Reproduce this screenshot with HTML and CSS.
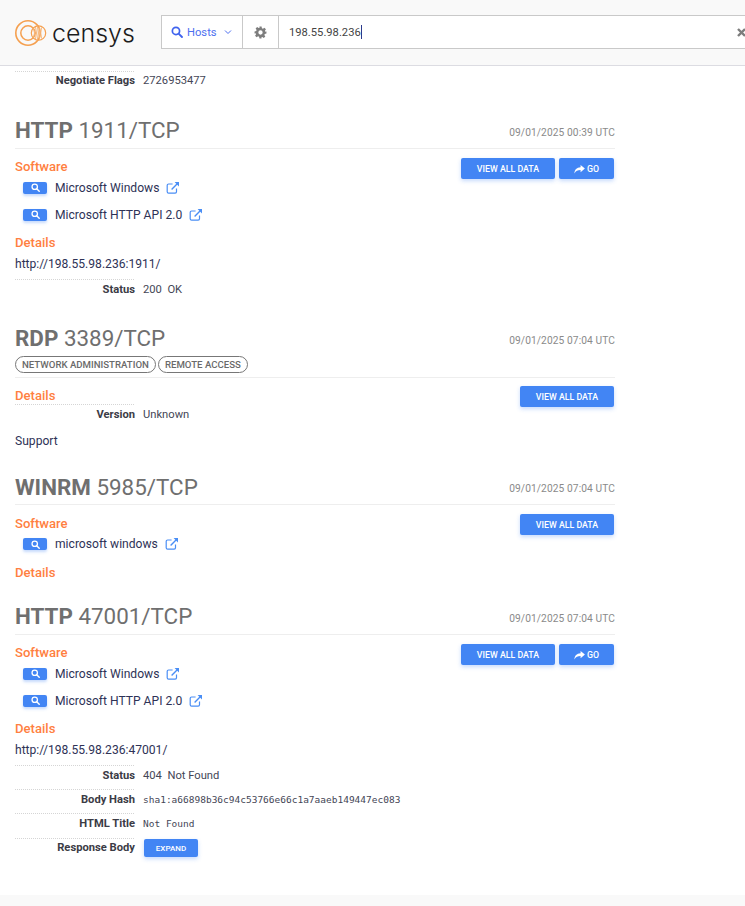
FILE: index.html
```html
<!DOCTYPE html>
<html lang="en">
<head>
  <meta charset="UTF-8">
  <title>198.55.98.236 - Censys</title>
  <link rel="stylesheet" href="styles.css">
</head>
<body>
  <svg class="icon-defs" width="0" height="0" aria-hidden="true">
    <symbol id="i-search" viewBox="0 0 14 14">
      <circle cx="5.8" cy="5.8" r="4.2" fill="none" stroke="currentColor" stroke-width="2"/>
      <path d="M8.9 8.9 12.8 12.8" fill="none" stroke="currentColor" stroke-width="2.2" stroke-linecap="round"/>
    </symbol>
    <symbol id="i-external" viewBox="0 0 14 14">
      <path d="M10.5 7.6v3.2a1.4 1.4 0 0 1-1.4 1.4H2.6a1.4 1.4 0 0 1-1.4-1.4V4.4A1.4 1.4 0 0 1 2.6 3h4" fill="none" stroke="currentColor" stroke-width="1.2"/>
      <path d="M5.6 8.4 12 2" fill="none" stroke="currentColor" stroke-width="1.4"/>
      <path d="M8.6 1h4.4v4.4z" fill="currentColor"/>
    </symbol>
  </svg>

  <div class="page">
    <!-- Header -->
    <header class="topbar">
      <div class="logo">
        <svg class="logo-mark" width="32" height="28" viewBox="0 0 32 28">
          <circle cx="13" cy="14" r="12.2" fill="none" stroke="#f5a050" stroke-width="1.6"/>
          <circle cx="13" cy="14" r="7.2" fill="none" stroke="#f5a050" stroke-width="1.5"/>
          <circle cx="23.5" cy="14" r="7.2" fill="none" stroke="#f5a050" stroke-width="1.2"/>
          <path d="M18.5 9.5q2 4.5 0 9M20.5 8q2 6 0 12M22.5 7.5q1.5 6.5 0 13M24.5 7.5q-1.5 6.5 0 13M26.5 8.5q-1.5 5.5 0 11" fill="none" stroke="#f7b678" stroke-width="1"/>
        </svg>
        <span class="logo-text">censys</span>
      </div>
      <div class="search">
        <div class="search-type">
          <svg class="search-type-icon" width="12" height="12"><use href="#i-search"/></svg>
          <span>Hosts</span>
          <svg class="chevron" width="8" height="6" viewBox="0 0 8 6"><path d="M1 1.5 4 4.5 7 1.5" fill="none" stroke="currentColor" stroke-width="1"/></svg>
        </div>
        <div class="search-gear">
          <svg width="13" height="13" viewBox="0 0 24 24"><path fill="#7d7d7d" fill-rule="evenodd" d="M10 1h4l.6 3.1 1.9.8 2.7-1.8 2.8 2.8-1.8 2.7.8 1.9L23 10v4l-3.1.6-.8 1.9 1.8 2.7-2.8 2.8-2.7-1.8-1.9.8L14 23h-4l-.6-3.1-1.9-.8-2.7 1.8-2.8-2.8 1.8-2.7-.8-1.9L1 14v-4l3-.6.8-1.9L3 4.8 5.8 2l2.7 1.8 1.9-.8zM12 8a4 4 0 1 0 0 8 4 4 0 0 0 0-8z"/></svg>
        </div>
        <div class="search-input"><span>198.55.98.236</span><i class="caret"></i></div>
        <svg class="search-clear" width="9" height="9" viewBox="0 0 9 9"><path d="M1 1 8 8M8 1 1 8" stroke="#7d7d7d" stroke-width="2.4"/></svg>
      </div>
    </header>

    <main class="content">
      <div class="kv kv-first">
        <span class="kv-key">Negotiate Flags</span>
        <span class="kv-val">2726953477</span>
      </div>

      <!-- HTTP 1911 -->
      <section class="service service-http1">
        <div class="service-head">
          <h2><b>HTTP</b> 1911/TCP</h2>
          <span class="date">09/01/2025 00:39 UTC</span>
        </div>
        <div class="service-body">
          <div class="service-main">
            <h3>Software</h3>
            <div class="software"><span class="sw-btn"><svg width="9" height="9"><use href="#i-search"/></svg></span>Microsoft Windows<svg class="ext" width="14" height="14"><use href="#i-external"/></svg></div>
            <div class="software"><span class="sw-btn"><svg width="9" height="9"><use href="#i-search"/></svg></span>Microsoft HTTP API 2.0<svg class="ext" width="14" height="14"><use href="#i-external"/></svg></div>
            <h3 class="details">Details</h3>
            <div class="url">http://198.55.98.236:1911/</div>
            <div class="kv"><span class="kv-key">Status</span><span class="kv-val">200&nbsp; OK</span></div>
          </div>
          <div class="actions">
            <a class="btn btn-data">View all data</a>
            <a class="btn btn-go"><svg width="11" height="9" viewBox="0 0 12 10"><path fill="#fff" d="M7.2 0 12 4 7.2 8V5.6C4 5.6 1.8 6.4.4 9.4.4 5.4 2.8 2.6 7.2 2.4z"/></svg>Go</a>
          </div>
        </div>
      </section>

      <!-- RDP -->
      <section class="service service-rdp">
        <div class="service-head">
          <div>
            <h2><b>RDP</b> 3389/TCP</h2>
            <div class="tags">
              <span class="tag">Network Administration</span>
              <span class="tag">Remote Access</span>
            </div>
          </div>
          <span class="date">09/01/2025 07:04 UTC</span>
        </div>
        <div class="service-body">
          <div class="service-main">
            <h3>Details</h3>
            <div class="kv"><span class="kv-key">Version</span><span class="kv-val">Unknown</span></div>
            <div class="support">Support</div>
          </div>
          <div class="actions"><a class="btn btn-data">View all data</a></div>
        </div>
      </section>

      <!-- WINRM -->
      <section class="service service-winrm">
        <div class="service-head">
          <h2><b>WINRM</b> 5985/TCP</h2>
          <span class="date">09/01/2025 07:04 UTC</span>
        </div>
        <div class="service-body">
          <div class="service-main">
            <h3>Software</h3>
            <div class="software"><span class="sw-btn"><svg width="9" height="9"><use href="#i-search"/></svg></span>microsoft windows<svg class="ext" width="14" height="14"><use href="#i-external"/></svg></div>
            <h3 class="details">Details</h3>
          </div>
          <div class="actions"><a class="btn btn-data">View all data</a></div>
        </div>
      </section>

      <!-- HTTP 47001 -->
      <section class="service service-http2">
        <div class="service-head">
          <h2><b>HTTP</b> 47001/TCP</h2>
          <span class="date">09/01/2025 07:04 UTC</span>
        </div>
        <div class="service-body">
          <div class="service-main">
            <h3>Software</h3>
            <div class="software"><span class="sw-btn"><svg width="9" height="9"><use href="#i-search"/></svg></span>Microsoft Windows<svg class="ext" width="14" height="14"><use href="#i-external"/></svg></div>
            <div class="software"><span class="sw-btn"><svg width="9" height="9"><use href="#i-search"/></svg></span>Microsoft HTTP API 2.0<svg class="ext" width="14" height="14"><use href="#i-external"/></svg></div>
            <h3 class="details">Details</h3>
            <div class="url">http://198.55.98.236:47001/</div>
            <div class="kv"><span class="kv-key">Status</span><span class="kv-val">404&nbsp; Not Found</span></div>
            <div class="kv"><span class="kv-key">Body Hash</span><span class="kv-val mono">sha1:a66898b36c94c53766e66c1a7aaeb149447ec083</span></div>
            <div class="kv kv-title"><span class="kv-key">HTML Title</span><span class="kv-val mono">Not Found</span></div>
            <div class="kv kv-body"><span class="kv-key">Response Body</span><span class="kv-val"><a class="btn btn-expand">Expand</a></span></div>
          </div>
          <div class="actions">
            <a class="btn btn-data">View all data</a>
            <a class="btn btn-go"><svg width="11" height="9" viewBox="0 0 12 10"><path fill="#fff" d="M7.2 0 12 4 7.2 8V5.6C4 5.6 1.8 6.4.4 9.4.4 5.4 2.8 2.6 7.2 2.4z"/></svg>Go</a>
          </div>
        </div>
      </section>
    </main>

    <footer class="footer"></footer>
  </div>
</body>
</html>
```

FILE: styles.css
```css
html, body {
  margin: 0;
  padding: 0;
}
body {
  font-family: Roboto, "Liberation Sans", sans-serif;
  font-size: 12px;
  color: #363a4f;
  background: #fff;
}
.icon-defs {
  display: block;
  height: 0;
}
.page {
  width: 745px;
  height: 906px;
  overflow: hidden;
}

/* Header */
.topbar {
  display: flex;
  height: 65px;
  background: #f9f9f9;
  border-bottom: 1px solid #dcdce2;
}
.logo {
  display: flex;
  align-items: center;
  width: 161px;
  flex-shrink: 0;
  padding-left: 15px;
  box-sizing: border-box;
}
.logo-mark {
  flex-shrink: 0;
}
.logo-text {
  margin-left: 5px;
  font-family: Inter, sans-serif;
  font-size: 25px;
  font-weight: 300;
  line-height: 30px;
  color: #1c1c1c;
}
.search {
  display: flex;
  align-items: center;
  position: relative;
  width: 590px;
  flex-shrink: 0;
  height: 34px;
  margin-top: 15px;
  background: #fff;
  border: 1px solid #c9c9c9;
  box-sizing: border-box;
}
.search-type {
  display: flex;
  align-items: center;
  width: 81px;
  height: 100%;
  padding-left: 9px;
  box-sizing: border-box;
  border-right: 1px solid #c9c9c9;
  color: #4d6ff0;
  font-size: 11.2px;
}
.search-type-icon {
  margin-right: 4px;
  color: #3f63ee;
}
.chevron {
  margin-left: 7px;
}
.search-gear {
  display: flex;
  align-items: center;
  justify-content: center;
  width: 36px;
  height: 100%;
  border-right: 1px solid #c9c9c9;
  box-sizing: border-box;
}
.search-input {
  display: flex;
  align-items: center;
  padding-left: 10px;
  font-size: 11.2px;
  color: #444;
}
.caret {
  display: block;
  width: 1px;
  height: 14px;
  background: #2b3a8c;
}
.search-clear {
  position: absolute;
  left: 575px;
  top: 12px;
}

/* Content */
.content {
  display: flow-root;
  width: 600px;
  height: 829px;
  margin-left: 15px;
}
.kv {
  display: flex;
  height: 24px;
  line-height: 22px;
  position: relative;
}
.kv::before {
  content: "";
  position: absolute;
  left: 0;
  top: 0;
  width: 119px;
  border-top: 1px dotted #d5d5d5;
}
.kv-key {
  width: 120px;
  text-align: right;
  font-weight: 700;
  font-size: 11.2px;
  color: #3b3b45;
}
.kv-val {
  padding-left: 8px;
  font-size: 11.2px;
  color: #444656;
}
.mono {
  font-family: "DejaVu Sans Mono", monospace;
  font-size: 9.5px;
}
.kv-first {
  margin-top: 5px;
  line-height: 20px;
}
.kv-title {
  height: 25px;
}
.kv-body {
  line-height: 20px;
}
.service-http1 { margin-top: 18px; }
.service-rdp { margin-top: 18px; }
.service-winrm { margin-top: 20px; }
.service-http2 { margin-top: 19px; }

.service-head {
  display: flex;
  justify-content: space-between;
  align-items: flex-start;
  height: 35px;
  border-bottom: 1px solid #eeeeee;
}
.service-rdp .service-head {
  height: 56px;
}
.service-winrm .service-head {
  height: 34px;
}
h2 {
  margin: 0;
  font-size: 22.4px;
  line-height: 34px;
  font-weight: 400;
  color: #6f6f6f;
}
h2 b {
  font-weight: 700;
}
.date {
  font-size: 10.2px;
  line-height: 14px;
  margin-top: 13px;
  color: #8a8a8a;
  letter-spacing: 0.1px;
}
.service-winrm .date {
  margin-top: 12px;
}
.tags {
  display: flex;
  gap: 2px;
  margin-top: 1px;
}
.tag {
  height: 15px;
  line-height: 15px;
  padding: 0 6px;
  border: 1px solid #777;
  border-radius: 9px;
  font-size: 9.65px;
  font-weight: 500;
  text-transform: uppercase;
  color: #6a6a6a;
}
.service-body {
  display: grid;
}
.service-main,
.actions {
  grid-area: 1 / 1;
}
h3 {
  height: 16px;
  margin: 9px 0 0;
  font-size: 13.1px;
  line-height: 18px;
  font-weight: 500;
  color: #ff7f41;
}
.service-rdp h3 {
  margin-bottom: 1px;
}
.service-winrm h3 {
  margin-top: 10px;
}
h3.details {
  margin-top: 6px;
}
.service-winrm h3.details {
  margin-top: 7px;
}
.software {
  display: flex;
  align-items: center;
  height: 27px;
  padding-left: 8px;
  font-size: 12.1px;
  color: #2e3256;
}
.sw-btn {
  display: flex;
  align-items: center;
  justify-content: center;
  width: 24px;
  height: 12px;
  margin-right: 8px;
  background: #4285f4;
  border-radius: 2px;
  color: #fff;
  box-shadow: 0 2px 3px rgba(66, 133, 244, 0.3);
}
.ext {
  margin-left: 7px;
  color: #4a8ef5;
}
.service-winrm .software {
  height: 26px;
  margin-bottom: 1px;
}
.url {
  height: 26px;
  line-height: 28px;
  margin-bottom: 3px;
  font-size: 12.1px;
  color: #2e3256;
}
.support {
  height: 20px;
  margin-top: 2px;
  line-height: 22px;
  font-size: 12.1px;
  color: #2e3256;
}
.actions {
  display: flex;
  gap: 4px;
  justify-self: end;
  align-self: start;
  padding-top: 9px;
  padding-right: 1px;
}
.service-rdp .actions {
  padding-top: 8px;
}
.btn {
  display: block;
  height: 21px;
  padding-top: 1px;
  box-sizing: border-box;
  line-height: 20px;
  background: #4285f4;
  border-radius: 2px;
  color: #fff;
  font-size: 8.8px;
  font-weight: 500;
  text-align: center;
  text-transform: uppercase;
  box-shadow: 0 2px 4px rgba(66, 133, 244, 0.3);
}
.btn-data {
  width: 94px;
}
.btn-go {
  display: flex;
  align-items: center;
  justify-content: center;
  gap: 2px;
  width: 55px;
}
.btn-expand {
  width: 54px;
  height: 18px;
  line-height: 17px;
  margin: 1px 0 0 1px;
  font-size: 8px;
}
.footer {
  height: 11px;
  background: #f9f9f9;
}
```
